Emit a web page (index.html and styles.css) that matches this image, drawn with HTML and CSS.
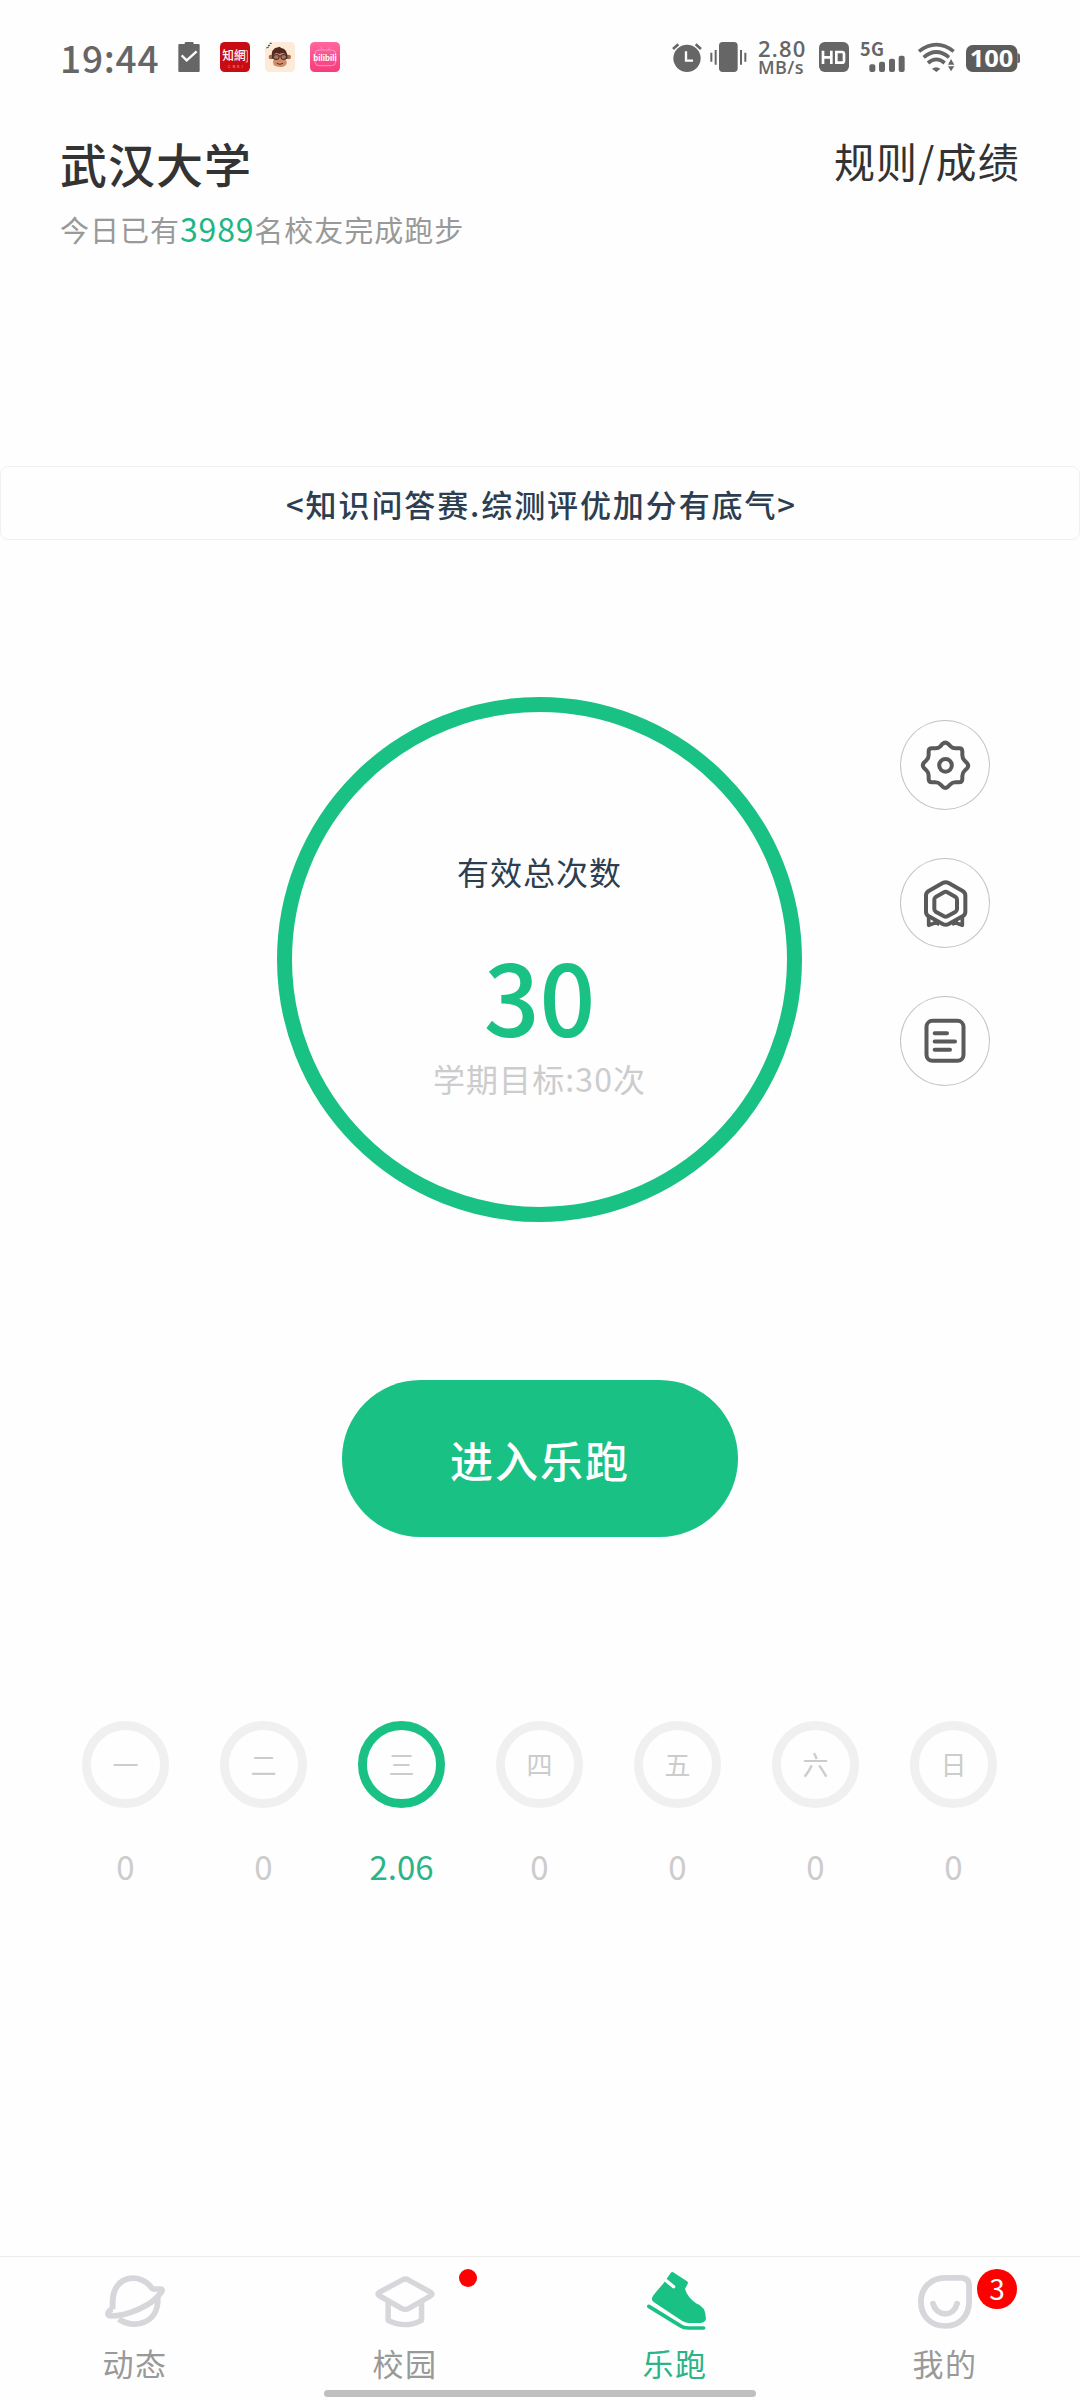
FILE: index.html
```html
<!DOCTYPE html>
<html lang="zh-CN">
<head>
<meta charset="utf-8">
<title>乐跑</title>
<link rel="stylesheet" href="styles.css">
</head>
<body>
<div class="status">
  <div class="status-left">
    <span class="clock">19:44</span>
    <svg class="clip" width="22" height="30" viewBox="415 66 66 90"><path fill="#666" d="M419 72h16v-2q0-4 4-4h19q4 0 4 4v2h15q3 0 3 3v78q0 3-3 3h-58q-3 0-3-3V75q0-3 3-3z"/><path fill="none" stroke="#fff" stroke-width="7" d="M426 106l15 15 30-27"/></svg>
    <svg class="app" viewBox="540 66 90 90"><rect x="540" y="66" width="90" height="90" rx="14" fill="#c90c14"/><text x="547" y="121" class="logo-cn" textLength="70" lengthAdjust="spacingAndGlyphs">知網</text><path d="M616 92h6v34h-5" fill="none" stroke="#fff" stroke-width="2"/><text x="564" y="143" class="logo-sub" textLength="44">CNKI</text></svg>
    <svg class="app" viewBox="675 66 90 90"><rect x="675" y="66" width="90" height="90" rx="14" fill="#fdebd7"/><path d="M675 66h24l-24 22z" fill="#f8f8f8"/><path d="M679 84l7-3M684 77l6-1M689 70l6 0" stroke="#555" stroke-width="4"/><circle cx="693" cy="111" r="7" fill="#a96a4c"/><circle cx="746" cy="111" r="7" fill="#a96a4c"/><path d="M696 116q-5-31 18-34l6-2 2 3q24 5 20 34z" fill="#53291d"/><path d="M701 105q5-11 17-3 15-8 20 4 2 6-1 10 11 24-18 25-27-1-18-24-3-5 0-12z" fill="#d08d6c"/><g fill="#a87460" stroke="#35221f" stroke-width="3"><rect x="701" y="104" width="16" height="14" rx="5"/><rect x="723" y="104" width="16" height="14" rx="5"/></g><path d="M716 108h8M710 130q10 6 19 0" stroke="#5a302a" stroke-width="3" fill="none"/></svg>
    <svg class="app" viewBox="810 66 90 90"><defs><linearGradient id="pink" x2="0" y2="1"><stop stop-color="#ff679d"/><stop offset="1" stop-color="#f63b7d"/></linearGradient></defs><rect x="810" y="66" width="90" height="90" rx="14" fill="url(#pink)"/><g fill="none" stroke="#ff98bc" stroke-width="3"><rect x="825" y="90" width="62" height="47" rx="12"/><path d="M842 82l6 8M870 82l-6 8"/></g><text x="820" y="123" class="logo-bili" textLength="70" lengthAdjust="spacingAndGlyphs">bilibili</text></svg>
  </div>
  <div class="status-right">
    <svg class="alarm" width="30" height="30" viewBox="66 66 90 90"><circle cx="111" cy="115" r="41" fill="#666"/><path d="M69 87l16-14M137 73l16 14" stroke="#666" stroke-width="8"/><path d="M108 94v28h21" fill="none" stroke="#fff" stroke-width="7"/></svg>
    <svg class="vibe" width="37" height="30" viewBox="182 66 111 90"><rect x="209" y="66" width="56" height="90" rx="11" fill="#666"/><path d="M186 98v27M199 90v44M275 90v44M288 98v27" stroke="#666" stroke-width="6"/></svg>
    <div class="speed"><span class="rate">2.80</span><span class="unit">MB/s</span></div>
    <svg class="hd" width="30" height="30" viewBox="507 66 90 90"><rect x="507" y="66" width="90" height="90" rx="17" fill="#666"/><path d="M519 92v40M544 92v40M519 112h25" stroke="#fff" stroke-width="8"/><path d="M559 96h17q6 0 6 6v20q0 6-6 6h-17z" fill="none" stroke="#fff" stroke-width="8"/></svg>
    <svg class="signal" width="45" height="30" viewBox="631 66 135 90"><text x="631" y="109" class="net" textLength="72">5G</text><g fill="#666"><rect x="659" y="133" width="18" height="23" rx="6"/><rect x="688" y="125" width="18" height="31" rx="6"/><rect x="718" y="116" width="18" height="40" rx="6"/><rect x="747" y="107" width="18" height="49" rx="6"/></g></svg>
    <svg class="wifi" width="37" height="30" viewBox="804 66 111 90"><g fill="none" stroke="#666" stroke-width="11"><path d="M807 94q52-40 104 0"/><path d="M821 112q38-32 76 0"/><path d="M834 129q25-22 50 0"/></g><path fill="#666" d="M846 146q12-9 25 0l-12 10zM894 134l9-17 10 17zM894 139l9 15 10-15z"/></svg>
    <svg class="battery" width="54" height="30" viewBox="948 66 162 90"><rect x="948" y="75" width="154" height="81" rx="20" fill="#5c5c5c"/><path d="M1102 100q8 0 8 6v18q0 6-8 6z" fill="#666"/><text x="959" y="142" class="charge" textLength="131" lengthAdjust="spacingAndGlyphs">100</text></svg>
  </div>
</div>

<header class="header">
  <div>
    <h1 class="school">武汉大学</h1>
    <p class="today">今日已有<b class="count">3989</b>名校友完成跑步</p>
  </div>
  <a class="rules">规则/成绩</a>
</header>

<div class="banner">&lt;知识问答赛.综测评优加分有底气&gt;</div>

<main class="main">
  <section class="stage">
    <div class="ring">
      <div class="ring-label">有效总次数</div>
      <div class="ring-value">30</div>
      <div class="ring-goal">学期目标:30次</div>
    </div>
    <div class="tools">
      <div class="tool"><svg class="tool-icon" viewBox="60 60 270 270"><g fill="none" stroke="#5a5a5a" stroke-width="12" stroke-linejoin="round"><path d="M187 132q9-8 18 0l7 7q6 6 14 6h12q9 0 9 10v10q0 10 6 16l8 8q7 8 0 16l-7 7q-7 7-7 16v9q0 10-10 10h-11q-9 0-15 6l-7 7q-8 7-16 0l-7-7q-6-6-15-6h-10q-10 0-10-10v-10q0-9-6-15l-8-8q-7-8 0-16l7-7q7-7 7-16v-11q0-9 10-9h11q8 0 14-6z"/><circle cx="196.500" cy="196" r="19"/></g></svg></div>
      <div class="tool"><svg class="tool-icon" viewBox="60 474 270 270"><g fill="none" stroke="#5a5a5a" stroke-width="12" stroke-linejoin="round"><path d="M188 549q9-5 18 0l42 24q8 5 8 13v50q0 8-7 12l-43 24q-9 5-18 0l-43-24q-7-4-7-12v-50q0-8 8-13z"/><path d="M192 577q5-3 10 0l25 14q4 3 4 8v28q0 5-4 8l-25 14q-5 3-10 0l-25-14q-4-3-4-8v-28q0-5 4-8z"/><path stroke-width="11" d="M146 649v27l24-9M247 649v27l-24-9M160 664l18 9M234 664l-18 9"/></g></svg></div>
      <div class="tool"><svg class="tool-icon" viewBox="60 888 270 270"><g fill="none" stroke="#5a5a5a" stroke-width="12" stroke-linecap="round"><rect x="139.500" y="962.500" width="111" height="120" rx="18"/><path d="M164 1000h37M164 1024.500h61M164 1049.500h46"/></g></svg></div>
    </div>
  </section>

  <button class="start">进入乐跑</button>

  <section class="week">
    <div class="day"><span class="dot">一</span><span class="km">0</span></div>
    <div class="day"><span class="dot">二</span><span class="km">0</span></div>
    <div class="day active"><span class="dot">三</span><span class="km">2.06</span></div>
    <div class="day"><span class="dot">四</span><span class="km">0</span></div>
    <div class="day"><span class="dot">五</span><span class="km">0</span></div>
    <div class="day"><span class="dot">六</span><span class="km">0</span></div>
    <div class="day"><span class="dot">日</span><span class="km">0</span></div>
  </section>
</main>

<nav class="tabs">
  <div class="tab"><svg class="tab-icon" viewBox="299 90 186 192" preserveAspectRatio="none"><g fill="none" stroke="#d7d7db" stroke-width="17" stroke-linejoin="round"><path d="M327 208V188C327 100 412 98 441 145Q444 148 452 147H466Q474 148 468 157C440 200 365 228 321 228Q310 227 315 216Q320 208 328 208"/><path d="M345 237C382 268 462 254 458 174"/></g></svg><span class="tab-label">动态</span></div>
  <div class="tab"><svg class="tab-icon" viewBox="1083 90 186 192" preserveAspectRatio="none"><g fill="none" stroke="#d7d7db" stroke-width="16" stroke-linejoin="round"><path d="M1168 120Q1177 114 1186 120L1251 157Q1258 162 1251 167L1188 205Q1177 211 1166 205L1101 167Q1094 162 1101 157Z"/><path d="M1127 185V241Q1177 267 1224 241V185"/></g></svg><span class="tab-label">校园</span><i class="badge-dot"></i></div>
  <div class="tab current"><svg class="tab-icon" viewBox="299 90 186 192" preserveAspectRatio="none"><path fill="#1ac184" d="M380 98Q384 94 389 98L427 124Q431 127 429 131L421 147Q428 171 453 190Q482 199 482 237Q480 248 466 249H431Q421 248 412 242L331 187Q322 181 326 172Q329 164 357 132Z"/><path fill="none" stroke="#fff" stroke-width="10" stroke-linecap="round" d="M365 121L388 140"/><path fill="none" stroke="#1ac184" stroke-width="11" stroke-linecap="round" stroke-linejoin="round" d="M316 199L407 257Q417 264 431 264H475"/></svg><span class="tab-label">乐跑</span></div>
  <div class="tab"><svg class="tab-icon" viewBox="1083 90 186 192" preserveAspectRatio="none"><g fill="none" stroke="#d7d7db" stroke-width="17" stroke-linecap="round"><path d="M1176 113.500H1223Q1246 114 1246 138V185C1246 228 1218 258 1176 258C1134 258 1106 227 1106 186C1106 145 1134 113.500 1176 113.500Z"/><path d="M1141 191C1153 232 1200 232 1211 191"/></g></svg><span class="tab-label">我的</span><i class="badge">3</i></div>
  <div class="home-bar"></div>
</nav>
</body>
</html>
```
FILE: styles.css
```css
* { box-sizing: border-box; }
body {
  margin: 0;
  width: 1080px;
  height: 2400px;
  display: flex;
  flex-direction: column;
  background: #fefefe;
  font-family: "Noto Sans CJK SC", sans-serif;
  color: #333;
}
svg { display: block; flex: none; overflow: visible; }

.status {
  height: 114px;
  padding: 0 60px 0 60px;
  display: flex;
  justify-content: space-between;
  align-items: center;
  color: #666;
}
.status-left, .status-right { display: flex; align-items: center; }
.clock { width: 118px; font-size: 37px; line-height: 48px; font-weight: 500; letter-spacing: 0.8px; padding-bottom: 1px; }
.app { width: 30px; height: 30px; }
.clip { margin-right: 20px; }
.app + .app { margin-left: 15px; }
.logo-cn { font: 500 37px "Noto Sans CJK TC", sans-serif; fill: #fff; }
.logo-sub { font: 10px "Liberation Sans", sans-serif; fill: #f2b8b8; }
.logo-bili { font: 700 29px "Liberation Sans", sans-serif; fill: #fff; }
.net { font: 700 54px "Noto Sans CJK SC", sans-serif; fill: #666; }
.charge { font: 700 67px "Open Sans", sans-serif; fill: #fff; }
.vibe { margin-left: 8px; }
.speed { width: 49px; margin: 0 12px 0 11px; display: flex; flex-direction: column; font-family: "Open Sans", sans-serif; font-weight: 600; }
.rate { font-size: 22px; line-height: 20px; letter-spacing: 1.2px; }
.unit { font-size: 18px; line-height: 18px; letter-spacing: 0.4px; }
.signal { margin-left: 11px; }
.wifi { margin-left: 13px; }
.battery { margin-left: 11px; }

.header {
  height: 352px;
  padding: 16px 60px 0 60px;
  display: flex;
  justify-content: space-between;
  align-items: flex-start;
}
.school { margin: 3px 0 0; font-size: 47px; line-height: 60px; font-weight: 500; letter-spacing: 1px; }
.today { margin: 16px 0 0; font-size: 29px; line-height: 40px; letter-spacing: 1px; color: #999; }
.count { font-size: 32px; line-height: 1; font-weight: 400; letter-spacing: 0.8px; color: #1fb683; }
.rules { font-size: 41px; line-height: 60px; font-weight: 400; letter-spacing: 1.2px; }

.banner {
  height: 74px;
  padding-left: 3px;
  border: 1px solid #f0f0f0;
  border-radius: 8px;
  text-align: center;
  font-size: 31px;
  line-height: 73px;
  font-weight: 500;
  letter-spacing: 1.9px;
  color: #2c3e50;
}

.main { display: flex; flex-direction: column; align-items: center; }
.stage {
  width: 1080px;
  margin-top: 157px;
  display: grid;
  grid-template-columns: 277px 525px 1fr;
}
.ring {
  grid-column: 2;
  height: 525px;
  padding-top: 139px;
  border: 15px solid #1ac184;
  border-radius: 50%;
  text-align: center;
}
.ring-label { font-size: 32px; line-height: 40px; letter-spacing: 1px; color: #2c3e50; }
.ring-value { margin: 53px 0 14px; font-size: 98px; line-height: 100px; font-weight: 500; color: #1ac184; }
.ring-goal { font-size: 32px; line-height: 40px; letter-spacing: 1.1px; color: #ccc; }
.tools {
  padding: 23px 0 0 8px;
  display: flex;
  flex-direction: column;
  align-items: center;
  gap: 48px;
}
.tool { width: 90px; height: 90px; border-radius: 50%; box-shadow: inset 0 0 0 1px #c4c4c4; }
.tool-icon { width: 90px; height: 90px; }

.start {
  width: 396px;
  height: 157px;
  margin: 158px 0 0;
  padding: 0;
  border: 0;
  border-radius: 79px;
  background: #1ac184;
  color: #fff;
  font: 500 43px "Noto Sans CJK SC", sans-serif;
  letter-spacing: 2px;
}

.week { width: 966px; margin: 184px 1px 0 0; display: grid; grid-template-columns: repeat(7, 1fr); }
.day { display: flex; flex-direction: column; align-items: center; }
.dot {
  width: 87px;
  height: 87px;
  border: 9px solid #f0f0f0;
  border-radius: 50%;
  text-align: center;
  font-size: 26px;
  line-height: 67px;
  color: #ccc;
}
.km { margin-top: 38px; font-size: 33px; line-height: 40px; color: #ccc; }
.active .dot { border-color: #1ac184; }
.active .km { color: #2bb486; }

.tabs {
  position: relative;
  height: 144px;
  margin-top: auto;
  border-top: 1px solid #ececec;
  display: grid;
  grid-template-columns: repeat(4, 1fr);
}
.tab {
  position: relative;
  padding-top: 13px;
  display: flex;
  flex-direction: column;
  align-items: center;
}
.tab-icon { width: 64px; height: 64px; }
.tab-label { margin-top: 9px; font-size: 31px; line-height: 40px; letter-spacing: 1.5px; color: #999; }
.current .tab-label { color: #2bb486; }
.badge-dot, .badge { position: absolute; top: 12px; border-radius: 50%; background: #f00; }
.badge-dot { left: 189px; width: 18px; height: 18px; }
.badge {
  left: 167px;
  width: 40px;
  height: 40px;
  color: #fff;
  text-align: center;
  font: normal 28px/39px "Noto Sans CJK SC", sans-serif;
}
.home-bar {
  position: absolute;
  left: 324px;
  top: 133px;
  width: 432px;
  height: 7px;
  border-radius: 4px;
  background: #c0c0c0;
}
```
